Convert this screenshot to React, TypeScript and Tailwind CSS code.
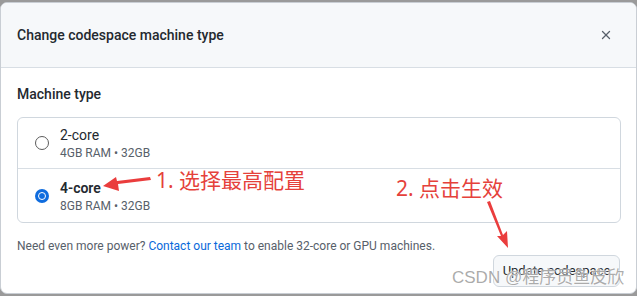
import { X } from 'lucide-react';

const font = { fontFamily: 'Roboto, "Noto Sans CJK SC", sans-serif' };

function Radio({ checked }: { checked?: boolean }) {
  return checked ? (
    <span className="flex h-[14px] w-[14px] shrink-0 items-center justify-center rounded-full bg-[#0f6cde]">
      <span className="h-[8px] w-[8px] rounded-full border-[1.5px] border-white bg-[#0f6cde]" />
    </span>
  ) : (
    <span className="h-[14px] w-[14px] shrink-0 rounded-full border border-[#5c5c5c] bg-white" />
  );
}

function Option({ name, spec, checked, last }: { name: string; spec: string; checked?: boolean; last?: boolean }) {
  return (
    <div className={`flex items-center gap-[11px] pl-[17px] ${last ? 'h-[53px] pt-[1px]' : 'h-[51px] border-b border-[#d8dee4]'}`}>
      <Radio checked={checked} />
      <div className="leading-none">
        <div className={`text-[14px] text-[#24292f] ${checked ? 'font-semibold' : ''}`}>{name}</div>
        <div className="mt-[5px] text-[12px] text-[#57606a]">{spec}</div>
      </div>
    </div>
  );
}

export default function App() {
  return (
    <div className="relative h-[296px] w-[637px] overflow-hidden bg-[#9a9a9a] pt-[2px]" style={font}>
      <div className="h-[292px] overflow-hidden rounded-[7px] border border-[#c9ced4] bg-white">
        <div className="flex h-[65px] items-center justify-between border-b border-[#d8dee4] bg-[#f6f8fa] pl-[16px] pr-[23px]">
          <span className="text-[14px] font-medium text-[#24292f]">Change codespace machine type</span>
          <X size={14} strokeWidth={2.2} className="text-[#57606a]" />
        </div>
        <div className="px-[16px] pt-[16px]">
          <div className="text-[14px] font-medium leading-[20px] text-[#24292f]">Machine type</div>
          <div className="mt-[13px] w-[604px] rounded-[6px] border border-[#d0d7de]">
            <Option name="2-core" spec="4GB RAM • 32GB" />
            <Option name="4-core" spec="8GB RAM • 32GB" checked last />
          </div>
          <div className="mt-[14px] text-[12px] leading-[18px] text-[#57606a]">
            Need even more power? <span className="text-[#0969da]">Contact our team</span> to enable 32-core or GPU machines.
          </div>
          <div className="mt-0 flex justify-end">
            <button className="h-[32px] w-[127px] rounded-[6px] border border-[#d0d7de] bg-[#f6f8fa] text-[13px] text-[#24292f]">
              Update codespace
            </button>
          </div>
        </div>
      </div>

      {/* red annotations */}
      <svg className="absolute left-0 top-0" width="637" height="296">
        <polygon points="150,177 151,180 118,184 119,191 103,186 116,177 117,181" fill="#ea3d3d" />
        <polygon points="487,202 490,201 503,235 507,231 508,248 497,236 501,236" fill="#ea3d3d" />
      </svg>
      <div
        className="absolute left-[156px] top-[166px] text-[21px] leading-[28px] text-[#e5413b]"
        style={{ fontFamily: '"Noto Sans", "Noto Sans CJK SC", sans-serif' }}
      >
        1. 选择最高配置
      </div>
      <div
        className="absolute left-[396px] top-[174px] text-[21px] leading-[28px] text-[#e5413b]"
        style={{ fontFamily: '"Noto Sans", "Noto Sans CJK SC", sans-serif' }}
      >
        2. 点击生效
      </div>

      {/* watermark */}
      <div
        className="absolute left-[452px] top-[266px] text-[17px] leading-[24px] text-[#8f8f8f]/75"
        style={{ fontFamily: '"Liberation Sans", "Noto Sans CJK SC", sans-serif', textShadow: '0 0 2px #fff, 0 0 1px #fff' }}
      >
        CSDN @程序员鱼皮欣
      </div>
    </div>
  );
}
